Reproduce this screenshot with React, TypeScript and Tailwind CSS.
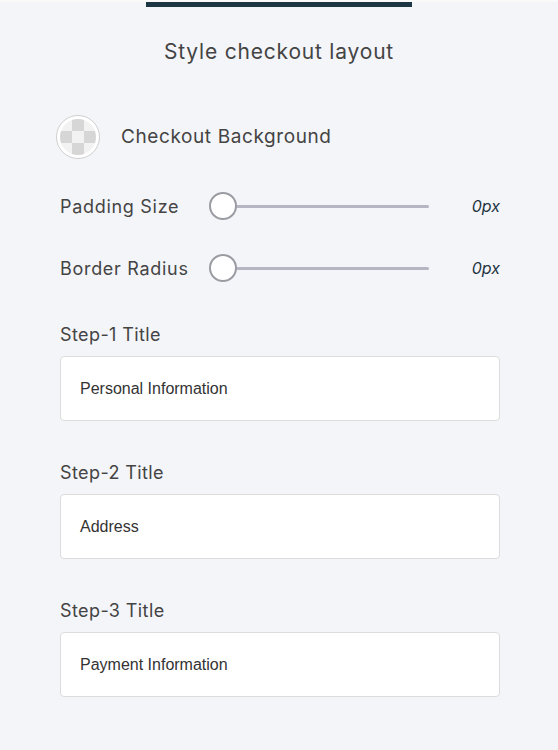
import React from 'react';

const font = { fontFamily: 'Inter, "Noto Sans", sans-serif' };

function Slider({ label, value }: { label: string; value: string }) {
  return (
    <div className="flex items-center h-[28px]">
      <div className="w-[149px] text-[18px] text-[#444] tracking-[0.7px]">{label}</div>
      <div className="relative w-[220px] h-[28px] flex items-center">
        <div className="absolute left-[14px] right-0 h-[3px] bg-[#b5b5c4] rounded-full" />
        <div className="absolute left-0 w-[28px] h-[28px] rounded-full bg-white border-2 border-[#9b9ba3]" />
      </div>
      <div className="flex-1 text-right text-[16px] italic text-[#23343f]">{value}</div>
    </div>
  );
}

function Field({ label, value }: { label: string; value: string }) {
  return (
    <div>
      <div className="text-[18px] leading-[24px] text-[#444] tracking-[0.4px]">{label}</div>
      <div className="mt-[9px] h-[65px] bg-white border border-[#dcdcdc] rounded-[4px] flex items-center px-[19px]">
        <span className="text-[16px] text-[#333]" style={{ fontFamily: '"Liberation Sans", Arial, sans-serif' }}>
          {value}
        </span>
      </div>
    </div>
  );
}

export default function App() {
  return (
    <div className="w-[558px] h-[750px] bg-[#f4f5f9] overflow-hidden" style={font}>
      <div className="h-[2px] bg-[#fafafa]" />
      <div className="mx-auto w-[266px] h-[5px] bg-[#1d3643]" />
      <h1 className="mt-[31px] text-center text-[21px] leading-[28px] text-[#444] tracking-[0.8px]">
        Style checkout layout
      </h1>

      <div className="pl-[60px] pr-[58px]">
        {/* Background picker */}
        <div className="mt-[49px] -ml-[4px] flex items-center gap-[21px]">
          <div className="w-[44px] h-[44px] rounded-full border border-[#cfcfcf] bg-white flex items-center justify-center">
            <div className="w-[36px] h-[36px] rounded-full overflow-hidden grid grid-cols-3 grid-rows-3">
              {[0, 1, 0, 1, 0, 1, 0, 1, 0].map((c, i) => (
                <div key={i} className={c ? 'bg-[#d6d6d6]' : 'bg-[#f2f2f2]'} />
              ))}
            </div>
          </div>
          <span className="text-[19px] text-[#444] tracking-[0.6px]">Checkout Background</span>
        </div>

        <div className="mt-[33px]">
          <Slider label="Padding Size" value="0px" />
        </div>
        <div className="mt-[34px]">
          <Slider label="Border Radius" value="0px" />
        </div>

        <div className="mt-[41px] flex flex-col gap-[40px]">
          <Field label="Step-1 Title" value="Personal Information" />
          <Field label="Step-2 Title" value="Address" />
          <Field label="Step-3 Title" value="Payment Information" />
        </div>
      </div>
    </div>
  );
}
